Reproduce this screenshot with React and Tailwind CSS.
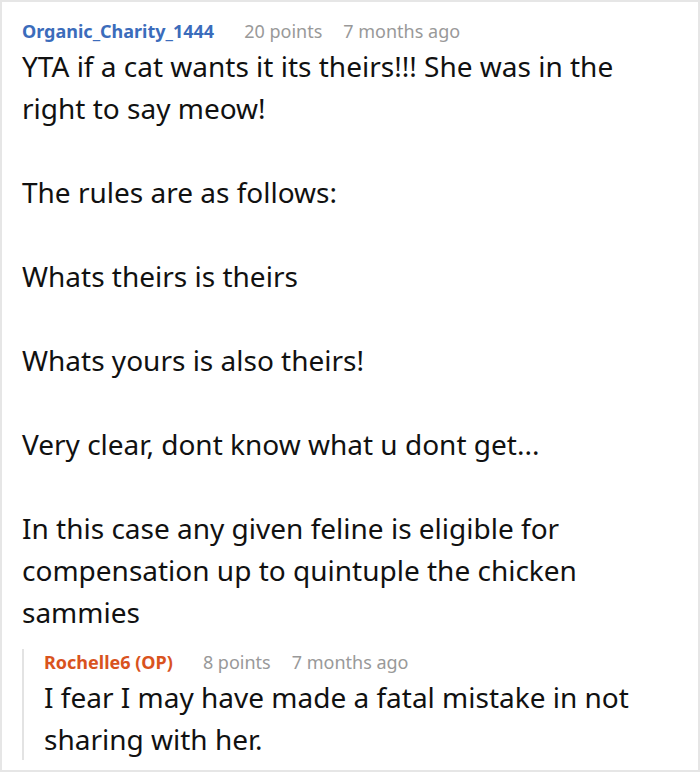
import React from "react";

const paragraphs = [
  "YTA if a cat wants it its theirs!!! She was in the right to say meow!",
  "The rules are as follows:",
  "Whats theirs is theirs",
  "Whats yours is also theirs!",
  "Very clear, dont know what u dont get...",
  "In this case any given feline is eligible for compensation up to quintuple the chicken sammies",
];

const App = () => {
  return (
    <div
      className="w-[700px] h-[772px] border-2 border-[#e6e6e6] bg-white overflow-hidden box-border"
      style={{ fontFamily: '"Noto Sans", "Open Sans", sans-serif' }}
    >
      <div className="pl-[20px] pr-[20px] pt-[16px]">
        {/* comment header */}
        <div className="flex items-center text-[18px] leading-[26px]">
          <span className="font-bold text-[#3b6cbb]">Organic_Charity_1444</span>
          <span className="text-[#999999] ml-[30px]">20 points</span>
          <span className="text-[#999999] ml-[21px]">7 months ago</span>
        </div>

        {/* comment body */}
        <div className="mt-[1px] text-[28px] leading-[42px] text-[#111111]">
          {paragraphs.map((p, i) => (
            <p key={i} className={i > 0 ? "mt-[42px]" : ""}>
              {p}
            </p>
          ))}
        </div>

        {/* reply */}
        <div className="mt-[16px] border-l-2 border-[#e3e3e3] pl-[20px]">
          <div className="flex items-center text-[18px] leading-[26px]">
            <span className="font-bold text-[#d9531e]">Rochelle6 (OP)</span>
            <span className="text-[#999999] ml-[30px]">8 points</span>
            <span className="text-[#999999] ml-[21px]">7 months ago</span>
          </div>
          <p className="mt-[1px] text-[28px] leading-[42px] text-[#111111] pr-[30px]">
            I fear I may have made a fatal mistake in not sharing with her.
          </p>
        </div>
      </div>
    </div>
  );
};

export default App;
